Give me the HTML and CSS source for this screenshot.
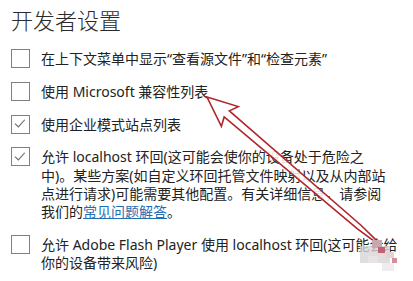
FILE: index.html
```html
<!DOCTYPE html>
<html lang="zh-CN">
<head>
<meta charset="utf-8">
<title>开发者设置</title>
<link rel="stylesheet" href="styles.css">
</head>
<body>
<div class="page">
  <h1 class="title">开发者设置</h1>
  <div class="list">
    <div class="row">
      <span class="box"></span>
      <div class="label">在上下文菜单中显示“查看源文件”和“检查元素”</div>
    </div>
    <div class="row">
      <span class="box"></span>
      <div class="label">使用 Microsoft 兼容性列表</div>
    </div>
    <div class="row">
      <span class="box checked"><svg viewBox="0 0 20 20" width="18" height="18"><polyline points="3.5,9.5 7.5,13.5 15,5" fill="none" stroke="#6b6b6b" stroke-width="1.3"/></svg></span>
      <div class="label">使用企业模式站点列表</div>
    </div>
    <div class="row">
      <span class="box checked"><svg viewBox="0 0 20 20" width="18" height="18"><polyline points="3.5,9.5 7.5,13.5 15,5" fill="none" stroke="#6b6b6b" stroke-width="1.3"/></svg></span>
      <div class="label">允许 localhost 环回(这可能会使你的设备处于危险之<br>中)。某些方案(如自定义环回托管文件映射以及从内部站<br>点进行请求)可能需要其他配置。有关详细信息，请参阅<br>我们的<a class="link" href="#">常见问题解答</a>。</div>
    </div>
    <div class="row">
      <span class="box"></span>
      <div class="label">允许 Adobe Flash Player 使用 localhost 环回(这可能会给<br>你的设备带来风险)</div>
    </div>
  </div>
</div>
<svg class="overlay" width="413" height="281" viewBox="0 0 413 281">
  <g transform="translate(207,97) rotate(40.5)">
    <polygon points="0,0 30,-13 26,-4 200,-2.5 222,-1 222,1 200,2.5 26,4 30,13" fill="#ffffff" fill-opacity="0.85" stroke="#b1262b" stroke-width="1.6" stroke-linejoin="miter"/>
  </g>
  <rect x="360" y="246" width="30" height="17" fill="#d8d4d6" opacity="0.8"/>
  <rect x="372" y="240" width="10" height="8" fill="#c9a7ad"/>
  <rect x="378" y="247" width="7" height="6" fill="#c46073"/>
  <rect x="386" y="252" width="8" height="6" fill="#e2d3d7"/>
  <rect x="392" y="258" width="5" height="5" fill="#d58c9b"/>
  <rect x="368" y="256" width="10" height="7" fill="#e8e4e6"/>
  <rect x="382" y="263" width="12" height="8" fill="#efeced"/>
</svg>
</body>
</html>
```
FILE: styles.css
```css
html, body {
  margin: 0;
  padding: 0;
  background: #ffffff;
  width: 413px;
  height: 281px;
  overflow: hidden;
}

body {
  position: relative;
  font-family: "Noto Sans", "Noto Sans CJK SC", sans-serif;
  color: #222222;
}

.page {
  padding: 6px 0 0 11px;
}

.title {
  margin: 0;
  font-family: "Noto Sans CJK SC", sans-serif;
  font-weight: 300;
  font-size: 22px;
  line-height: 26px;
  color: #2a2a2a;
}

.list {
  display: flex;
  flex-direction: column;
  gap: 14.5px;
  margin-top: 18px;
}

.row {
  display: flex;
  align-items: flex-start;
  gap: 11px;
}

.box {
  flex: none;
  width: 17px;
  height: 17px;
  margin-top: -1px;
  border: 1.5px solid #808080;
  display: flex;
  align-items: center;
  justify-content: center;
}

.box svg {
  display: block;
}

.label {
  font-size: 14px;
  line-height: 18.3px;
  white-space: nowrap;
}

.link {
  color: #1f6fb2;
  text-decoration: underline;
}

.overlay {
  position: absolute;
  left: 0;
  top: 0;
  pointer-events: none;
}
```
